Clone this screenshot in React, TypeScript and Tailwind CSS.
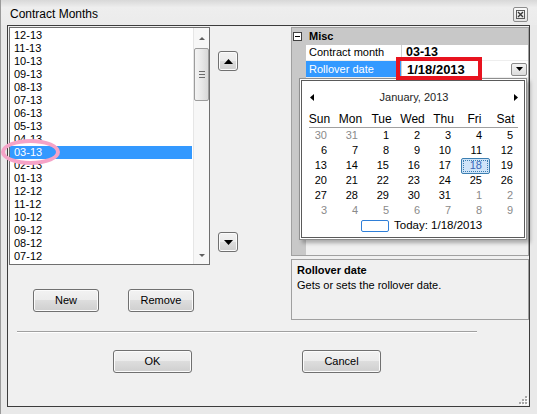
import React from "react";

const months = [
  "12-13", "11-13", "10-13", "09-13", "08-13", "07-13", "06-13", "05-13", "04-13",
  "03-13", "02-13", "01-13", "12-12", "11-12", "10-12", "09-12", "08-12", "07-12",
];

const weekdays = ["Sun", "Mon", "Tue", "Wed", "Thu", "Fri", "Sat"];

// Six visible weeks of January 2013 (Dec 30 .. Feb 9)
const days: { n: number; other: boolean }[] = [
  { n: 30, other: true },
  { n: 31, other: true },
  ...Array.from({ length: 31 }, (_, i) => ({ n: i + 1, other: false })),
  ...Array.from({ length: 9 }, (_, i) => ({ n: i + 1, other: true })),
];

function Tri({ dir, w, h, color = "#000" }: { dir: "up" | "down" | "left" | "right"; w: number; h: number; color?: string }) {
  const pts =
    dir === "up"
      ? `0,${h} ${w},${h} ${w / 2},0`
      : dir === "down"
      ? `0,0 ${w},0 ${w / 2},${h}`
      : dir === "left"
      ? `${w},0 ${w},${h} 0,${h / 2}`
      : `0,0 0,${h} ${w},${h / 2}`;
  return (
    <svg width={w} height={h} viewBox={`0 0 ${w} ${h}`} className="block">
      <polygon points={pts} fill={color} />
    </svg>
  );
}

function PushButton({ label, className }: { label: string; className: string }) {
  return (
    <div
      className={`flex items-center justify-center rounded-[3px] border border-[#707070] bg-[linear-gradient(#f2f2f2,#ebebeb_50%,#dddddd_50%,#cfcfcf)] text-[11px] leading-none text-black shadow-[inset_0_0_0_1px_#fbfbfb] ${className}`}
    >
      {label}
    </div>
  );
}

function ArrowButton({ dir }: { dir: "up" | "down" }) {
  return (
    <div className="flex h-[20px] w-[20px] items-center justify-center rounded-[3px] border border-[#707070] bg-[linear-gradient(#f2f2f2,#ebebeb_50%,#dddddd_50%,#cfcfcf)] shadow-[inset_0_0_0_1px_#fbfbfb]">
      <Tri dir={dir} w={9} h={5} />
    </div>
  );
}

function MonthList() {
  return (
    <div className="flex h-[238px] w-[201px] border border-[#6f6f6f] bg-white">
      <div className="flex-1 overflow-hidden pt-[1px] text-[11px]">
        {months.map((m) => (
          <div
            key={m}
            className={`flex h-[13px] items-center pl-[4px] leading-none ${
              m === "03-13" ? "mr-[1px] bg-[#3399ff] text-white" : "text-black"
            }`}
          >
            {m}
          </div>
        ))}
      </div>
      {/* vertical scroll bar */}
      <div className="flex w-[16px] flex-col items-center border-l border-[#e6e6e6] bg-[#f7f7f7]">
        <div className="flex h-[19px] items-center justify-center pt-[2px]">
          <Tri dir="up" w={6} h={3} color="#606060" />
        </div>
        <div className="mt-[1px] flex h-[53px] w-[15px] items-center justify-center rounded-[2px] border border-[#9c9c9c] bg-[linear-gradient(90deg,#f3f3f3,#e8e8e8_50%,#d8d8d8)]">
          <div className="flex flex-col gap-[2px]">
            <div className="h-px w-[6px] bg-[#6a6a6a]" />
            <div className="h-px w-[6px] bg-[#6a6a6a]" />
            <div className="h-px w-[6px] bg-[#6a6a6a]" />
          </div>
        </div>
        <div className="flex-1" />
        <div className="flex h-[17px] items-center justify-center">
          <Tri dir="down" w={6} h={3} color="#606060" />
        </div>
      </div>
    </div>
  );
}

function Calendar() {
  return (
    <div className="absolute left-[7px] top-[50px] h-[162px] w-[228px] border border-[#8e8e8e] bg-white p-[1px] shadow-[3px_3px_4px_rgba(0,0,0,0.3)]">
      <div className="flex h-full flex-col border border-[#5a5a5a]">
        <div className="mt-[6px] flex h-[20px] items-center pl-[8px] pr-[6px]">
          <Tri dir="left" w={4} h={7} />
          <div className="flex-1 text-center text-[11px] leading-none text-[#1e1e1e]">January, 2013</div>
          <Tri dir="right" w={4} h={7} />
        </div>
        <div className="ml-[2px] mt-[3px] grid h-[17px] w-[217px] grid-cols-7 items-center text-[12px] leading-none">
          {weekdays.map((d) => (
            <div key={d} className="text-center">
              {d}
            </div>
          ))}
        </div>
        <div className="ml-[7px] mr-[6px] h-px bg-[#a0a0a0]" />
        <div className="ml-[2px] grid w-[217px] grid-cols-7 text-[11px] leading-none">
          {days.map((d, i) => {
            const sel = i === 19;
            return (
              <div key={i} className="flex h-[15px] items-center justify-end">
                {sel ? (
                  <div className="flex h-[16px] w-[29px] items-center justify-end rounded-[2px] border border-[#3c7fb1] bg-[#cfe4f9] pr-[7px] text-[#3a67b8] outline-1 -outline-offset-3 outline-dotted outline-[#3c7fb1]">
                    {d.n}
                  </div>
                ) : (
                  <span className={`pr-[8px] ${d.other ? "text-[#8a8a8a]" : "text-black"}`}>{d.n}</span>
                )}
              </div>
            );
          })}
        </div>
        <div className="flex h-[15px] items-center pl-[59px]">
          <div className="h-[12px] w-[28px] rounded-[2px] border-[1.5px] border-[#2f7fd8]" />
          <span className="ml-[5px] text-[11.5px] leading-none">Today: 1/18/2013</span>
        </div>
      </div>
    </div>
  );
}

function PropertyGrid() {
  return (
    <div className="relative flex h-[229px] flex-col border border-[#a0a0a0] bg-[#c8c8c8] text-[11px]">
      {/* category row */}
      <div className="flex h-[17px] items-center pl-[1px]">
        <div className="flex h-[9px] w-[9px] items-center justify-center border border-[#404040] bg-white">
          <div className="h-px w-[5px] bg-black" />
        </div>
        <span className="ml-[7px] font-bold leading-none">Misc</span>
      </div>
      <div className="flex flex-1">
        <div className="w-[14px]" />
        <div className="flex flex-1 flex-col bg-white">
          <div className="flex h-[16px] border-b border-[#eeeeee]">
            <div className="flex w-[96px] items-center border-r border-[#d0d0d0] pl-[3px] leading-none">Contract month</div>
            <div className="flex flex-1 items-center pl-[4px] text-[12.5px] font-bold leading-none">03-13</div>
          </div>
          <div className="flex h-[16px]">
            <div className="flex w-[96px] items-center border-r border-[#d0d0d0] bg-[#3399ff] pl-[3px] leading-none text-white">Rollover date</div>
            <div className="flex flex-1 items-center justify-between pl-[5px] pr-[1px]">
              <span className="text-[13px] font-bold leading-none">1/18/2013</span>
              <div className="flex h-[13px] w-[16px] items-center justify-center rounded-[2px] border border-[#8a8a8a] bg-[linear-gradient(#f4f4f4,#dcdcdc)]">
                <Tri dir="down" w={7} h={4} />
              </div>
            </div>
          </div>
          <div className="flex-1 bg-[#f0f0f0]" />
        </div>
      </div>
      <Calendar />
      {/* highlight frame around the edited value */}
      <div className="absolute left-[104px] top-[29px] h-[23px] w-[86px] border-4 border-[#e8131f]" />
    </div>
  );
}

function CloseButton() {
  return (
    <div className="flex h-[15px] w-[15px] items-center justify-center rounded-[2px] border border-[#8c8c8c] bg-[linear-gradient(#fafafa,#e2e2e2)]">
      <svg width="9" height="9" viewBox="0 0 9 9">
        <rect x="0.5" y="0.5" width="8" height="8" fill="none" stroke="#5a5a5a" strokeWidth="1" />
        <path d="M2 2 L7 7 M7 2 L2 7" stroke="#3a3a3a" strokeWidth="1.4" />
      </svg>
    </div>
  );
}

function SizeGrip() {
  const dots = [
    [7, 1],
    [4, 4], [7, 4],
    [1, 7], [4, 7], [7, 7],
  ];
  return (
    <svg width="10" height="10" viewBox="0 0 10 10" className="absolute bottom-[1px] right-[1px]">
      {dots.map(([x, y], i) => (
        <g key={i}>
          <rect x={x + 1} y={y + 1} width="2" height="2" fill="#ffffff" />
          <rect x={x} y={y} width="2" height="2" fill="#a8a8a8" />
        </g>
      ))}
    </svg>
  );
}

export default function App() {
  return (
    <div className="relative flex h-[414px] w-[537px] flex-col overflow-hidden border-l border-[#9a9a9a] bg-[#e9e9e9] font-['Liberation_Sans',Arial,sans-serif] text-black">
      {/* title bar */}
      <div className="flex h-[25px] shrink-0 items-center justify-between bg-[linear-gradient(#d8d8d8,#eeeeee_30%,#ebebeb)] pl-[9px] pr-[9px] pt-[3px]">
        <span className="text-[12px] leading-none">Contract Months</span>
        <CloseButton />
      </div>

      <div className="flex flex-1 pb-[7px] pl-[6px] pr-[7px]">
        <div className="relative flex flex-1 flex-col border border-[#3c3c3c] bg-[#f0f0f0]">
          <div className="flex items-start">
            {/* month list with New / Remove */}
            <div className="ml-[1px] mt-[1px] flex flex-col">
              <MonthList />
              <div className="ml-[24px] mt-[24px] flex gap-[29px]">
                <PushButton label="New" className="h-[23px] w-[66px]" />
                <PushButton label="Remove" className="h-[23px] w-[66px]" />
              </div>
            </div>

            {/* move up / down */}
            <div className="ml-[8px] mt-[25px] flex flex-col gap-[161px]">
              <ArrowButton dir="up" />
              <ArrowButton dir="down" />
            </div>

            {/* property editor */}
            <div className="ml-[53px] mt-[1px] flex w-[238px] flex-col">
              <PropertyGrid />
              <div className="mt-[3px] h-[61px] border border-[#a0a0a0] bg-[#f0f0f0] pl-[5px] pt-[5px] text-[11px] leading-none">
                <div className="font-bold">Rollover date</div>
                <div className="mt-[4px]">Gets or sets the rollover date.</div>
              </div>
            </div>
          </div>

          {/* separator */}
          <div className="ml-[9px] mt-[11px] w-[460px] border-b border-t border-b-white border-t-[#a0a0a0]" />

          <div className="mt-[17px] flex">
            <PushButton label="OK" className="ml-[105px] h-[23px] w-[79px]" />
            <PushButton label="Cancel" className="ml-[110px] h-[23px] w-[79px]" />
          </div>

          <SizeGrip />
        </div>
      </div>

      {/* pink marker around the selected month */}
      <div className="absolute left-0 top-[139px] h-[26px] w-[59px] rounded-[50%] border-[4px] border-[#f5a3c7]" />
    </div>
  );
}
